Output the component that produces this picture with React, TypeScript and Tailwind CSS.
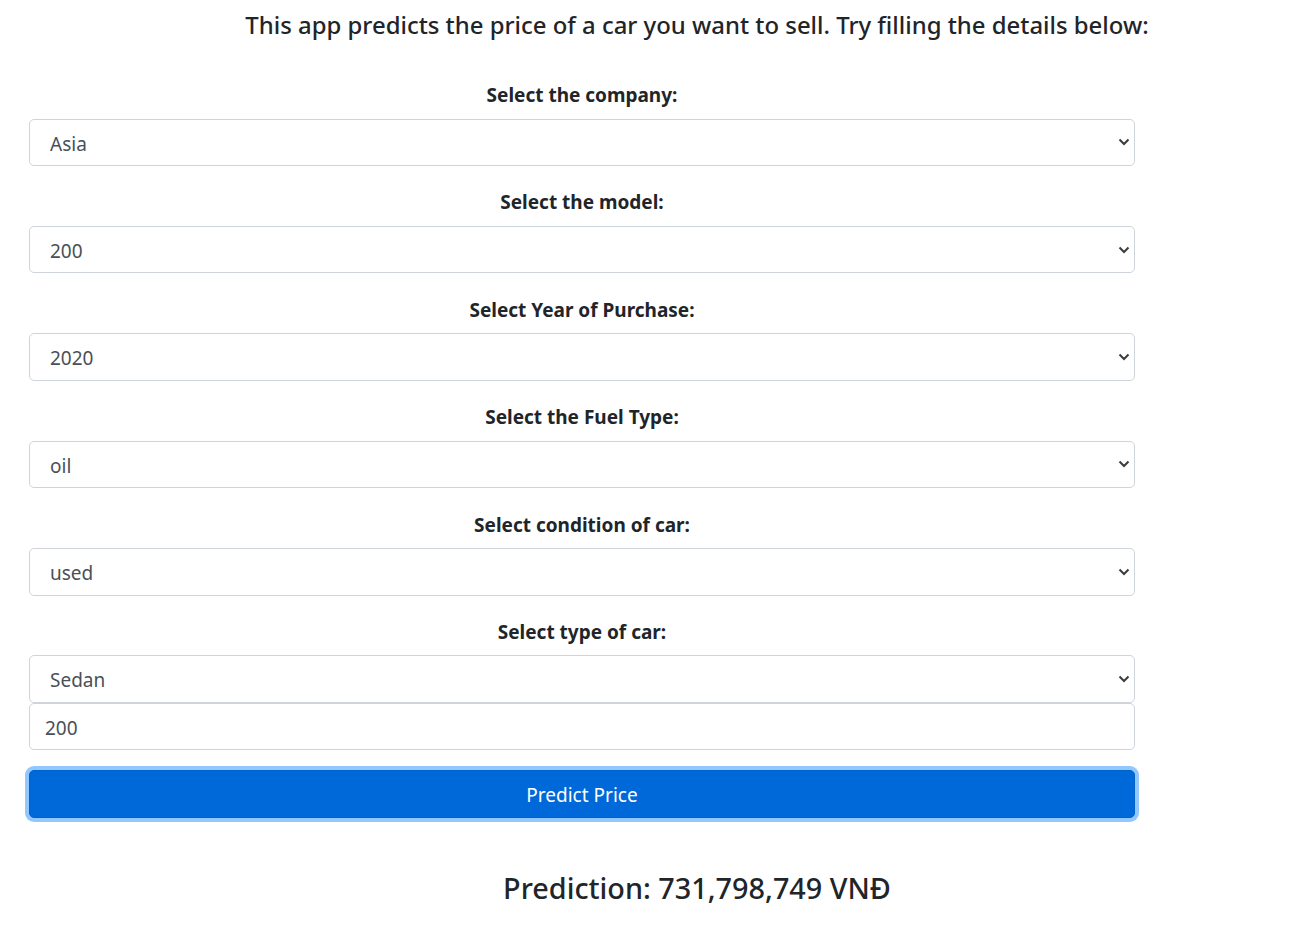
const fields = [
  { label: 'Select the company:', value: 'Asia' },
  { label: 'Select the model:', value: '200' },
  { label: 'Select Year of Purchase:', value: '2020' },
  { label: 'Select the Fuel Type:', value: 'oil' },
  { label: 'Select condition of car:', value: 'used' },
  { label: 'Select type of car:', value: 'Sedan' },
]

function Chevron() {
  return (
    <svg
      className="pointer-events-none absolute right-[5px] top-1/2 -translate-y-1/2"
      width="12"
      height="8"
      viewBox="0 0 12 8"
      fill="none"
    >
      <path d="M1.5 1.5L6 6l4.5-4.5" stroke="#3c3c3c" strokeWidth="2" />
    </svg>
  )
}

export default function App() {
  return (
    <div className="w-[1292px] min-h-[931px] bg-white text-[#212529] font-['Noto_Sans',sans-serif]">
      {/* Title */}
      <div className="pl-[102px] pt-[10px] text-center">
        <h5 className="text-[23.9px] leading-[30px] font-medium">
          This app predicts the price of a car you want to sell. Try filling the details below:
        </h5>
      </div>

      {/* Form */}
      <form className="ml-[29px] w-[1106px] pt-[39px]" onSubmit={(e) => e.preventDefault()}>
        {fields.map((f, i) => (
          <div key={f.label} className={i === 0 ? '' : 'mt-[20.4px]'}>
            <label className="block text-center text-[19px] leading-[30px] font-bold pt-[1px] mb-[8.5px]">
              {f.label}
            </label>
            <div className="relative">
              <select
                defaultValue={f.value}
                className="block w-full h-[47.5px] appearance-none rounded-[5px] border border-[#ced4da] bg-white pl-[20px] pr-8 pt-[3px] text-[19px] text-[#495057] outline-none"
              >
                <option value={f.value}>{f.value}</option>
              </select>
              <Chevron />
            </div>
          </div>
        ))}

        <input
          type="text"
          defaultValue="200"
          className="block w-full h-[47.5px] rounded-[5px] border border-[#ced4da] bg-white px-[15px] pt-[2px] text-[19px] text-[#495057] outline-none"
        />

        <button
          type="submit"
          className="mt-[20px] block w-full h-[47.5px] rounded-[5px] border border-[#0062cc] bg-[#0069d9] pt-[3px] text-[19px] text-white shadow-[0_0_0_4px_rgba(38,143,255,0.5)]"
        >
          Predict Price
        </button>
      </form>

      {/* Result */}
      <div className="pl-[102px] pt-[52px] text-center">
        <h4 className="text-[28.8px] leading-[36px] font-medium">Prediction: 731,798,749 VNĐ</h4>
      </div>
    </div>
  )
}
